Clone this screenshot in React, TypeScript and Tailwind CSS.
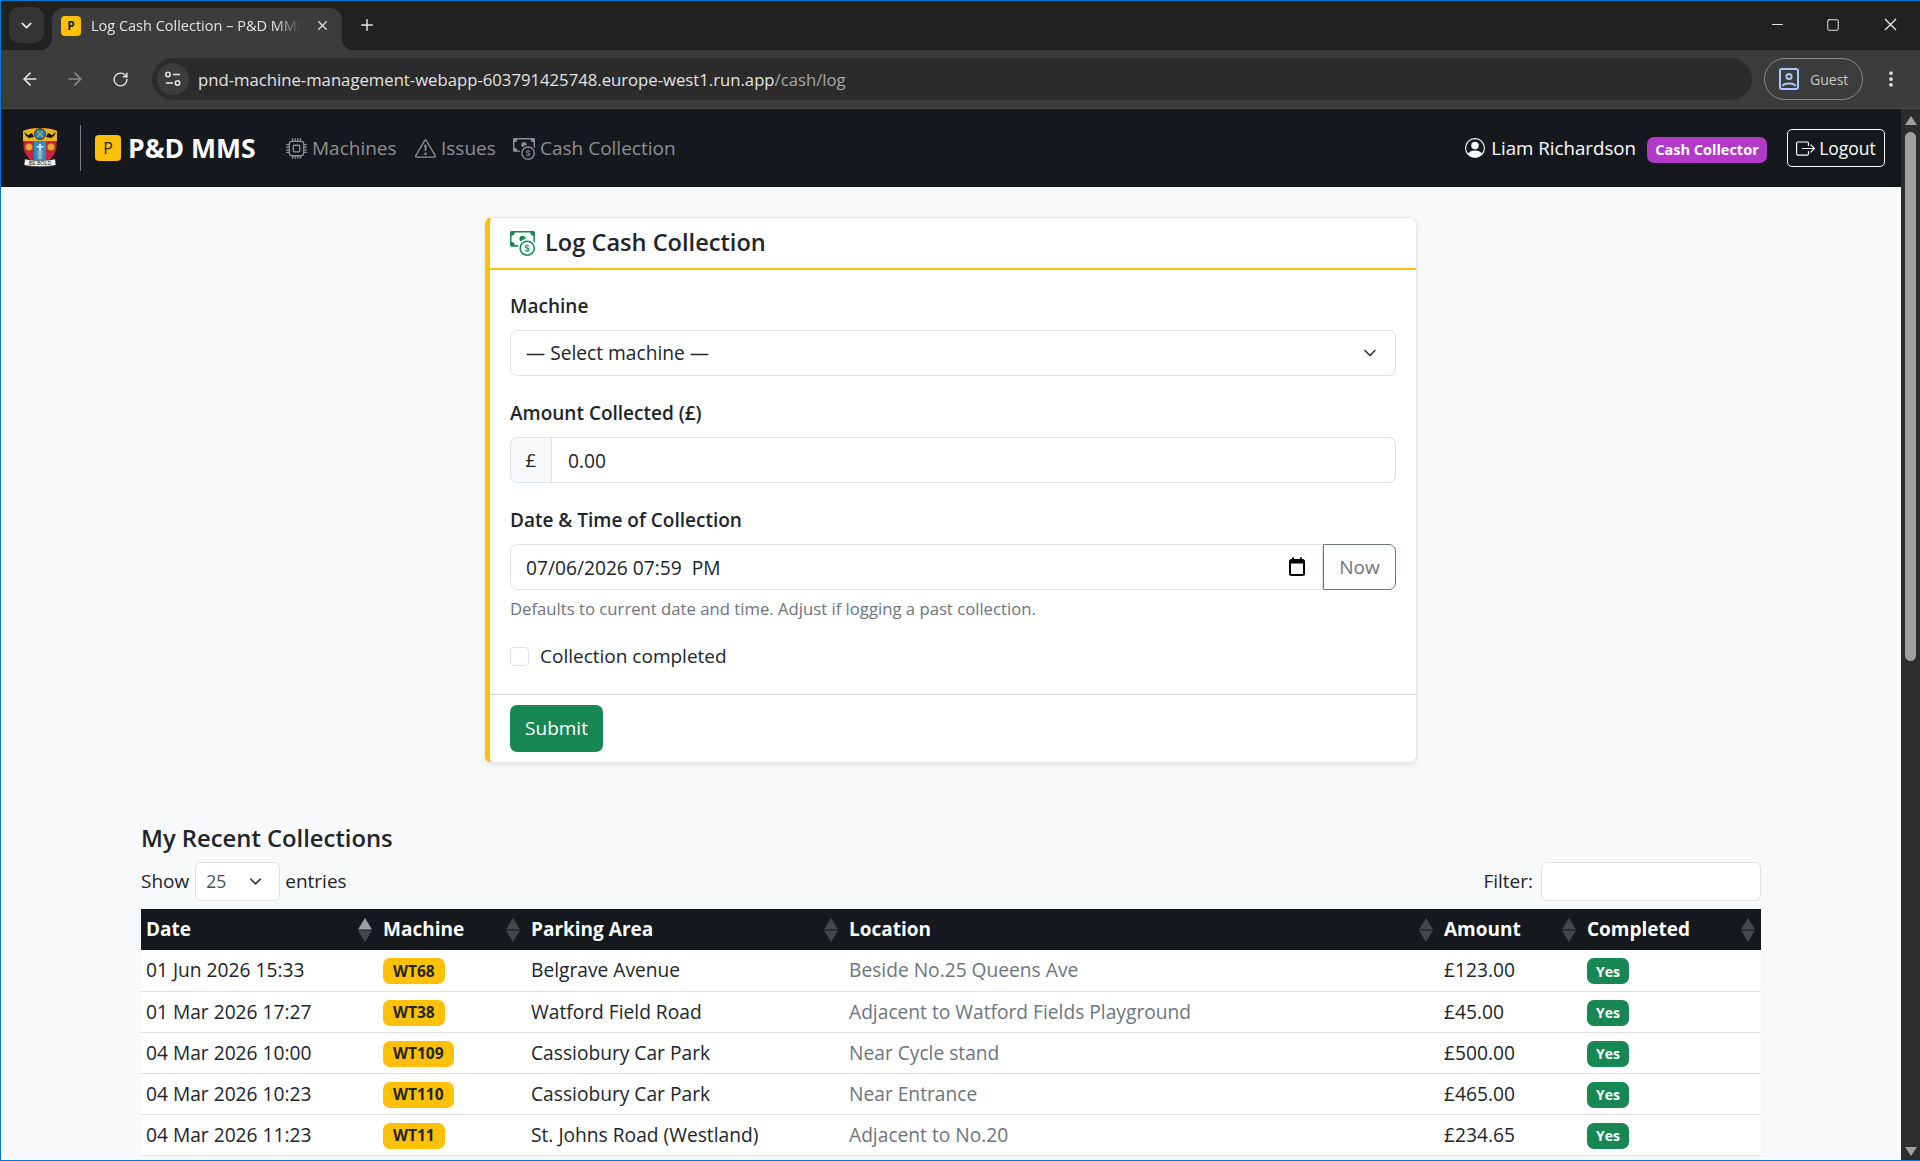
import { ArrowLeft, ArrowRight, ChevronDown, EllipsisVertical, Minus, Plus, RotateCw, Square, X } from 'lucide-react';
import { BsBoxArrowRight, BsCashCoin, BsCpu, BsExclamationTriangle, BsPersonCircle } from 'react-icons/bs';

const collections = [
  { date: '01 Jun 2026 15:33', machine: 'WT68', area: 'Belgrave Avenue', location: 'Beside No.25 Queens Ave', amount: '£123.00' },
  { date: '01 Mar 2026 17:27', machine: 'WT38', area: 'Watford Field Road', location: 'Adjacent to Watford Fields Playground', amount: '£45.00' },
  { date: '04 Mar 2026 10:00', machine: 'WT109', area: 'Cassiobury Car Park', location: 'Near Cycle stand', amount: '£500.00' },
  { date: '04 Mar 2026 10:23', machine: 'WT110', area: 'Cassiobury Car Park', location: 'Near Entrance', amount: '£465.00' },
  { date: '04 Mar 2026 11:23', machine: 'WT11', area: 'St. Johns Road (Westland)', location: 'Adjacent to No.20', amount: '£234.65' },
];

function SortArrows({ active }: { active?: boolean }) {
  return (
    <svg viewBox="0 0 14 24" className="absolute right-[6px] top-[9px] w-[14px] h-[24px]">
      <path d="M7 0L14 11.500H0Z" fill={active ? '#9b9fa2' : '#45494c'} />
      <path d="M7 24L14 12.500H0Z" fill="#45494c" />
    </svg>
  );
}

function Crest() {
  return (
    <svg viewBox="0 0 40 44" className="w-[40px] h-[44px] shrink-0">
      <path d="M3 5C10 1 30 1 37 5V20C37 29 28 37 20 42C12 37 3 29 3 20Z" fill="#c9243f" stroke="#0b0b0b" strokeWidth="0.6" />
      <path d="M3 5C10 1 30 1 37 5V15H3Z" fill="#e9b41f" />
      <rect x="14" y="15" width="12" height="25" fill="#2a8ec9" />
      <circle cx="20" cy="8" r="5.500" fill="#2a86bf" stroke="#161616" strokeWidth="0.8" />
      <path d="M17 5L23 11M23 5L17 11" stroke="#e9b41f" strokeWidth="1" />
      <path d="M4 6L8 9L12 7L14 11L9 12L6 10ZM36 6L32 9L28 7L26 11L31 12L34 10Z" fill="#15191d" />
      <circle cx="9" cy="21" r="3.800" fill="#e9a92a" stroke="#7a4a12" strokeWidth="0.5" />
      <circle cx="31" cy="21" r="3.800" fill="#e9a92a" stroke="#7a4a12" strokeWidth="0.5" />
      <path d="M18.800 18H21.200V33H18.800ZM16.500 20H23.500V21.500H16.500Z" fill="#d8e2e8" />
      <path d="M17.500 24H22.500V33H17.500Z" fill="#9aa7ad" opacity="0.7" />
      <path d="M5 33C11 35 29 35 35 33L36 39C29 41 11 41 4 39Z" fill="#f4f4f4" stroke="#333" strokeWidth="0.5" />
      <text x="20" y="39" textAnchor="middle" fontSize="5.200" fill="#222" fontFamily="Liberation Sans, sans-serif">BE BOLD</text>
    </svg>
  );
}

function SiteInfoIcon() {
  return (
    <svg viewBox="0 0 20 20" className="w-[20px] h-[20px]" fill="none" stroke="#e3e3e3" strokeWidth="1.600">
      <circle cx="5" cy="5.500" r="2.200" />
      <path d="M10 5.500H17" />
      <circle cx="14.500" cy="14" r="2.200" />
      <path d="M3 14H10" />
    </svg>
  );
}

function GuestIcon() {
  return (
    <svg viewBox="0 0 20 22" className="w-[20px] h-[22px]" fill="none" stroke="#a8c7fa" strokeWidth="2">
      <rect x="1" y="1" width="18" height="20" rx="2" />
      <circle cx="10" cy="8.500" r="2.600" />
      <path d="M3.500 18C5 14.500 15 14.500 16.500 18" />
    </svg>
  );
}

function CalendarIcon() {
  return (
    <svg viewBox="0 0 16 19" className="absolute right-[18px] top-[13px] w-[16px] h-[19px]" fill="none" stroke="#000" strokeWidth="2">
      <rect x="1" y="3" width="14" height="15" rx="1.500" />
      <path d="M1 5H15" strokeWidth="3" />
      <path d="M4 0.500V3M12 0.500V3" />
    </svg>
  );
}

function BrowserChrome() {
  return (
    <div className="shrink-0 font-['Open_Sans',sans-serif] text-[#e3e3e3]">
      {/* Tab strip */}
      <div className="h-[49px] bg-[#202222] flex items-end relative">
        <div className="absolute left-[8px] top-[6px] w-[35px] h-[36px] rounded-[10px] bg-[#333535] flex items-center justify-center">
          <ChevronDown className="w-[17px] h-[17px]" strokeWidth={2.5} />
        </div>
        <div className="ml-[51px] w-[290px] h-[42px] rounded-t-[12px] bg-[#3c3c3c] flex items-center pl-[9px] pb-[7px] relative">
          <div className="w-[20px] h-[20px] rounded-[4px] bg-[#ffc107] text-[#212529] text-[12px] font-bold flex items-center justify-center">P</div>
          <div className="ml-[10px] w-[210px] overflow-hidden whitespace-nowrap text-[14.500px] [mask-image:linear-gradient(to_right,black_88%,transparent)]">Log Cash Collection – P&amp;D MMS</div>
          <X className="w-[15px] h-[15px] ml-[14px]" />
          <div className="absolute -right-[12px] bottom-0 w-[12px] h-[12px] bg-[radial-gradient(circle_at_100%_0,transparent_12px,#3c3c3c_12.500px)]" />
          <div className="absolute -left-[12px] bottom-0 w-[12px] h-[12px] bg-[radial-gradient(circle_at_0_0,transparent_12px,#3c3c3c_12.500px)]" />
        </div>
        <Plus className="w-[18px] h-[18px] ml-[16px] mb-[16px]" />
        <div className="ml-auto flex items-center mb-[15px] text-white">
          <Minus className="w-[17px] h-[17px] mr-[40px]" strokeWidth={1.25} />
          <Square className="w-[14px] h-[14px] mr-[40px]" strokeWidth={1.5} />
          <X className="w-[21px] h-[21px] mr-[19px]" strokeWidth={1.25} />
        </div>
      </div>
      {/* Toolbar */}
      <div className="h-[59px] bg-[#3c3c3c] border-b border-[#4a4a4a] flex items-center">
        <ArrowLeft className="w-[20px] h-[20px] ml-[19px]" />
        <ArrowRight className="w-[20px] h-[20px] ml-[25px] text-[#8b8b8b]" />
        <RotateCw className="w-[17px] h-[17px] ml-[27px]" />
        <div className="ml-[23px] w-[1600px] h-[42px] rounded-full bg-[#2b2b2b] flex items-center pl-[5px]">
          <div className="w-[32px] h-[32px] rounded-full bg-[#3c3c3c] flex items-center justify-center">
            <SiteInfoIcon />
          </div>
          <div className="ml-[9px] mt-[2px] text-[16.700px] whitespace-nowrap">
            pnd-machine-management-webapp-603791425748.europe-west1.run.app<span className="text-[#a8a8a8]">/cash/log</span>
          </div>
        </div>
        <div className="ml-[12px] w-[99px] h-[42px] rounded-full border border-[#8a8a8a] flex items-center pl-[14px] gap-[11px]">
          <GuestIcon />
          <span className="text-[14px] text-[#c7c7c7]">Guest</span>
        </div>
        <EllipsisVertical className="w-[20px] h-[20px] ml-[18px]" strokeWidth={2.5} />
      </div>
    </div>
  );
}

function Navbar() {
  return (
    <nav className="h-[78px] shrink-0 bg-[#15191d] flex items-center pl-[19px] pr-[16px] text-[19px]">
      <Crest />
      <div className="w-px h-[46px] bg-[#7d7f81] ml-[20px]" />
      <div className="ml-[14px] w-[26px] h-[26px] rounded-[4px] bg-[#ffc107] text-[#212529] text-[16px] flex items-center justify-center">P</div>
      <div className="ml-[7px] mt-[1px] w-[128px] text-white font-bold text-[26.500px] whitespace-nowrap">P&amp;D MMS</div>
      <div className="ml-[30px] mt-[1px] flex items-center text-[#8e9092]">
        <BsCpu className="w-[21px] h-[21px]" />
        <span className="ml-[5px] w-[84px]">Machines</span>
        <BsExclamationTriangle className="ml-[19px] w-[21px] h-[21px]" />
        <span className="ml-[5px] w-[54px]">Issues</span>
        <BsCashCoin className="ml-[18px] w-[22px] h-[22px]" />
        <span className="ml-[5px]">Cash Collection</span>
      </div>
      <div className="ml-auto flex items-center text-white">
        <BsPersonCircle className="w-[20px] h-[20px]" />
        <span className="ml-[6px] mt-[1px] text-[18.700px]">Liam Richardson</span>
        <span className="ml-[11px] mt-[4px] h-[26px] w-[120px] rounded-[7px] bg-[#b13ac6] text-[14.500px] font-bold flex items-center justify-center">Cash Collector</span>
        <button className="ml-[20px] h-[38px] w-[98px] rounded-[5px] border border-white text-[17.500px] flex items-center justify-center gap-[4px]">
          <BsBoxArrowRight className="w-[19px] h-[19px]" />
          Logout
        </button>
      </div>
    </nav>
  );
}

function LogCashForm() {
  const inputClass = 'h-[46px] w-full bg-white border border-[#dee2e6] text-[19.200px] text-[#212529] outline-none';
  return (
    <div className="w-[932px] ml-[484px] mt-[30px] bg-white rounded-[7px] border border-[#e4e6e8] border-l-[5px] border-l-[#ffc107] shadow-[0_2px_5px_rgba(0,0,0,0.08)]">
      <div className="h-[52px] border-b-[2px] border-[#ffc107] flex items-center pl-[20px]">
        <BsCashCoin className="w-[25px] h-[25px] text-[#198754]" />
        <h5 className="ml-[10px] text-[23.600px] font-semibold text-[#212529]">Log Cash Collection</h5>
      </div>
      <div className="px-[20px] pt-[22px] pb-[27px] text-[#212529]">
        <label className="block h-[29px] mb-[9px] text-[19px] font-semibold">Machine</label>
        <div className="relative mb-[23px]">
          <select className={`${inputClass} appearance-none rounded-[7px] px-[15px]`} defaultValue="">
            <option value="">— Select machine —</option>
          </select>
          <ChevronDown className="absolute right-[16px] top-[13px] w-[20px] h-[20px] text-[#343a40]" strokeWidth={2} />
        </div>
        <label className="block h-[29px] mb-[9px] text-[19px] font-semibold">Amount Collected (£)</label>
        <div className="flex mb-[23px]">
          <span className="w-[42px] h-[46px] bg-[#f8f9fa] border border-[#dee2e6] rounded-l-[7px] flex items-center justify-center text-[19px] shrink-0">£</span>
          <input className={`${inputClass} border-l-0 rounded-r-[7px] px-[16px]`} defaultValue="0.00" />
        </div>
        <label className="block h-[29px] mb-[9px] text-[19px] font-semibold">Date &amp; Time of Collection</label>
        <div className="flex">
          <div className="relative flex-1">
            <input className={`${inputClass} rounded-l-[7px] px-[15px] whitespace-pre`} defaultValue="07/06/2026 07:59  PM" />
            <CalendarIcon />
          </div>
          <button className="w-[73px] h-[46px] shrink-0 border border-[#6c757d] rounded-r-[7px] text-[19px] text-[#6c757d]">Now</button>
        </div>
        <p className="mt-[7px] h-[24px] text-[16.700px] leading-[24px] text-[#6c757d]">Defaults to current date and time. Adjust if logging a past collection.</p>
        <label className="mt-[25px] flex items-center h-[21px] text-[19px]">
          <input type="checkbox" className="appearance-none w-[19px] h-[19px] rounded-[4px] border border-[#dee2e6] bg-white" />
          <span className="ml-[11px]">Collection completed</span>
        </label>
      </div>
      <div className="h-[68px] border-t border-[#d3d3d3] flex items-center pl-[20px]">
        <button className="w-[93px] h-[47px] rounded-[7px] bg-[#198754] text-white text-[19px]">Submit</button>
      </div>
    </div>
  );
}

function RecentCollections() {
  return (
    <div className="w-[1620px] mx-auto mt-[57px]">
      <h5 className="h-[36px] text-[23.800px] font-semibold leading-[36px] text-[#212529]">My Recent Collections</h5>
      <div className="mt-[6px] flex items-center h-[39px] text-[19px] text-[#212529]">
        <span>Show</span>
        <div className="relative ml-[6px]">
          <select className="appearance-none w-[85px] h-[39px] rounded-[6px] border border-[#dee2e6] bg-white pl-[10px] text-[17.500px] text-[#495057] outline-none" defaultValue="25">
            <option>25</option>
          </select>
          <ChevronDown className="absolute left-[51px] top-[10px] w-[19px] h-[19px] text-[#343a40]" />
        </div>
        <span className="ml-[5px]">entries</span>
        <span className="ml-auto">Filter:</span>
        <input className="ml-[8px] w-[220px] h-[39px] rounded-[6px] border border-[#dee2e6] bg-white outline-none" />
      </div>
      <table className="mt-[8px] w-full table-fixed text-[19.200px] text-[#212529] bg-white">
        <colgroup>
          <col className="w-[237px]" />
          <col className="w-[148px]" />
          <col className="w-[318px]" />
          <col className="w-[595px]" />
          <col className="w-[143px]" />
          <col className="w-[179px]" />
        </colgroup>
        <thead>
          <tr className="h-[41px] bg-[#15191d] text-white text-left text-[19px]">
            <th className="relative pl-[5px] font-bold"><span>Date</span><SortArrows active /></th>
            <th className="relative pl-[5px] font-bold"><span>Machine</span><SortArrows /></th>
            <th className="relative pl-[5px] font-bold"><span>Parking Area</span><SortArrows /></th>
            <th className="relative pl-[5px] font-bold"><span>Location</span><SortArrows /></th>
            <th className="relative pl-[5px] font-bold"><span>Amount</span><SortArrows /></th>
            <th className="relative pl-[5px] font-bold"><span>Completed</span><SortArrows /></th>
          </tr>
        </thead>
        <tbody>
          {collections.map((row) => (
            <tr key={row.date} className="h-[41px] border-b border-[#dee2e6]">
              <td className="pl-[5px] pt-[1px]">{row.date}</td>
              <td className="pl-[5px]">
                <span className="inline-flex items-center h-[26px] px-[10px] rounded-[7px] bg-[#ffc107] text-[15.500px] font-bold">{row.machine}</span>
              </td>
              <td className="pl-[5px] pt-[1px]">{row.area}</td>
              <td className="pl-[5px] pt-[1px] text-[#6c757d]">{row.location}</td>
              <td className="pl-[5px] pt-[1px]">{row.amount}</td>
              <td className="pl-[5px]">
                <span className="inline-flex items-center justify-center h-[26px] w-[42px] rounded-[7px] bg-[#198754] text-white text-[14px] font-bold">Yes</span>
              </td>
            </tr>
          ))}
        </tbody>
      </table>
    </div>
  );
}

function Scrollbar() {
  return (
    <div className="w-[19px] shrink-0 bg-[#2c2c2c] flex flex-col items-center">
      <div className="mt-[7px] w-0 h-0 border-x-[6px] border-x-transparent border-b-[9px] border-b-[#9f9f9f]" />
      <div className="mt-[7px] w-[11px] h-[529px] rounded-[6px] bg-[#9f9f9f]" />
      <div className="mt-auto mb-[4px] w-0 h-0 border-x-[6px] border-x-transparent border-t-[9px] border-t-[#9f9f9f]" />
    </div>
  );
}

export default function App() {
  return (
    <div className="w-[1920px] h-[1161px] overflow-hidden flex flex-col border-l border-t border-b border-[#0078d4] font-['Open_Sans',sans-serif]">
      <BrowserChrome />
      <div className="flex-1 min-h-0 flex">
        <div className="flex-1 min-w-0 bg-[#f8f9fa] overflow-hidden">
          <Navbar />
          <LogCashForm />
          <RecentCollections />
        </div>
        <Scrollbar />
      </div>
    </div>
  );
}
